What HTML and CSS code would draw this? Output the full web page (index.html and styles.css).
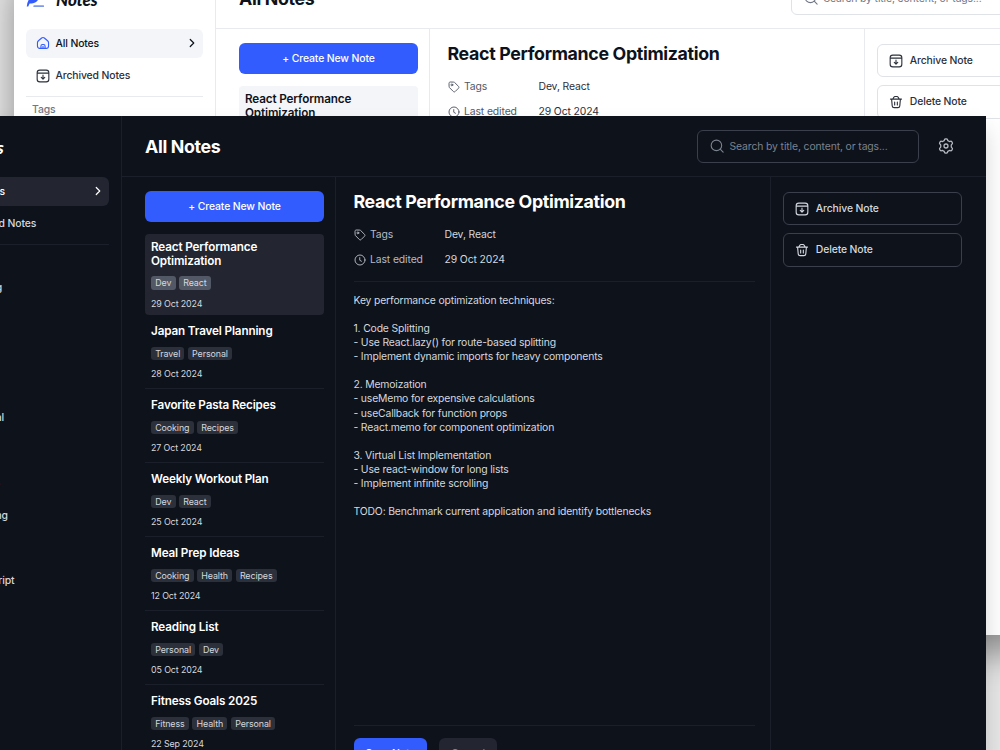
FILE: index.html
```html
<!DOCTYPE html>
<html lang="en">
<head>
    <meta charset="UTF-8">
    <meta name="viewport" content="width=device-width, initial-scale=1.0">
    <title>Notes</title>
    <link rel="stylesheet" href="styles.css">
</head>
<body>
    <svg class="sprite" width="0" height="0">
        <symbol id="home" viewBox="0 0 24 24">
            <path d="M8.500 21.200v-4.200c0-1.500.9-2.500 2.500-2.500h2c1.600 0 2.500 1 2.500 2.500v4.200M12 17.500v3M2.500 11.500c0-1.500.5-2.400 1.700-3.400l5.500-4.600c1.400-1.200 3.200-1.200 4.600 0l5.500 4.600c1.200 1 1.700 1.900 1.700 3.400V17c0 2.500-1.500 4.200-4 4.200H6.500C4 21.200 2.500 19.500 2.500 17z"/>
        </symbol>
        <symbol id="archive" viewBox="0 0 24 24">
            <rect x="2" y="2" width="20" height="20" rx="4.500"/>
            <path d="M2.500 7h19M12 10.500v6.500M9 14.500l3 3 3-3"/>
        </symbol>
        <symbol id="trash" viewBox="0 0 24 24">
            <path d="M2.500 7h19M4.500 7.500l1 11.200c.2 2 1.200 3 3.200 3h6.600c2 0 3-1 3.200-3l1-11.200M6.500 6.800l1.800-3c.5-.8 1-1.200 1.900-1.200h3.600c.9 0 1.400.4 1.900 1.200l1.800 3M9.700 12v5M14.300 12v5"/>
        </symbol>
        <symbol id="chevron" viewBox="0 0 24 24">
            <path d="M8.500 5l7 7-7 7"/>
        </symbol>
        <symbol id="search" viewBox="0 0 24 24">
            <circle cx="11" cy="11" r="9"/>
            <path d="M17.500 17.500l5 5"/>
        </symbol>
        <symbol id="gear" viewBox="0 0 24 24">
            <path d="M9.700 2.600c.3-1 .9-1.400 1.800-1.400h1c.9 0 1.500.4 1.800 1.400l.4 1.300 2.400 1.400 1.500-.4c1-.2 1.700.1 2.200.9l.6 1c.5.800.4 1.600-.3 2.300l-1.200 1.300v3.200l1.200 1.300c.7.7.8 1.500.3 2.300l-.6 1c-.5.800-1.200 1.100-2.200.9l-1.500-.4-2.400 1.400-.4 1.300c-.3 1-.9 1.400-1.800 1.400h-1c-.9 0-1.500-.4-1.800-1.400l-.4-1.300-2.400-1.400-1.500.4c-1 .2-1.700-.1-2.200-.9l-.6-1c-.5-.8-.4-1.600.3-2.300l1.200-1.300v-3.200L2.900 9.100c-.7-.7-.8-1.500-.3-2.300l.6-1c.5-.8 1.200-1.100 2.200-.9l1.500.4 2.400-1.400z"/>
            <circle cx="12" cy="12" r="3"/>
        </symbol>
        <symbol id="tag" viewBox="0 0 24 24">
            <path d="M2 4.500C2 3 3 2 4.500 2l6.700.2c.9 0 1.600.3 2.200.9l7.600 7.600c1.100 1.100 1.100 2.600 0 3.700l-6.600 6.600c-1.100 1.100-2.600 1.100-3.700 0l-7.600-7.600c-.6-.6-.9-1.300-.9-2.200z"/>
            <circle cx="7.800" cy="7.800" r="1.800"/>
        </symbol>
        <symbol id="clock" viewBox="0 0 24 24">
            <circle cx="12" cy="12" r="10"/>
            <path d="M11.500 7.200v5.300l3.400 2"/>
        </symbol>
        <symbol id="feather" viewBox="0 0 24 24">
            <path d="M1 22C2 11 10 2 21 2c.5 5-1.500 8-4 9.500l-3 .8 1.800 1.200C13 17 8.500 18 4.800 18L3 22z" fill="#335cff" stroke="none"/>
            <path d="M11 21.500h12" stroke="#7f98ea" stroke-width="2.500"/>
        </symbol>
    </svg>

    <!-- light theme window -->
    <div class="window light">
        <aside class="sidebar">
            <div class="logo"><svg class="logo-icon"><use href="#feather"/></svg>Notes</div>
            <nav>
                <a class="nav-item active"><svg class="icon"><use href="#home"/></svg>All Notes<svg class="icon chevron"><use href="#chevron"/></svg></a>
                <a class="nav-item"><svg class="icon"><use href="#archive"/></svg>Archived Notes</a>
            </nav>
            <div class="tags-title">Tags</div>
        </aside>
        <main>
            <header>
                <h1>All Notes</h1>
                <div class="search"><svg class="icon"><use href="#search"/></svg>Search by title, content, or tags...</div>
                <svg class="icon settings"><use href="#gear"/></svg>
            </header>
            <div class="columns">
                <section class="note-list">
                    <button class="btn primary create">+ Create New Note</button>
                    <article class="note selected">
                        <h3>React Performance Optimization</h3>
                        <div class="chips"><span>Dev</span><span>React</span></div>
                        <time>29 Oct 2024</time>
                    </article>
                </section>
                <section class="editor">
                    <h2>React Performance Optimization</h2>
                    <div class="meta">
                        <div class="label"><svg><use href="#tag"/></svg>Tags</div><div>Dev, React</div>
                        <div class="label"><svg><use href="#clock"/></svg>Last edited</div><div>29 Oct 2024</div>
                    </div>
                </section>
                <section class="actions">
                    <button class="btn outline"><svg class="icon"><use href="#archive"/></svg>Archive Note</button>
                    <button class="btn outline"><svg class="icon"><use href="#trash"/></svg>Delete Note</button>
                </section>
            </div>
        </main>
    </div>

    <!-- dark theme window -->
    <div class="window dark">
        <aside class="sidebar">
            <div class="logo"><svg class="logo-icon"><use href="#feather"/></svg>Notes</div>
            <nav>
                <a class="nav-item active"><svg class="icon"><use href="#home"/></svg>All Notes<svg class="icon chevron"><use href="#chevron"/></svg></a>
                <a class="nav-item"><svg class="icon"><use href="#archive"/></svg>Archived Notes</a>
            </nav>
            <div class="tags-title">Tags</div>
            <nav class="tag-nav">
                <a class="nav-item"><svg class="icon"><use href="#tag"/></svg>Cooking</a>
                <a class="nav-item"><svg class="icon"><use href="#tag"/></svg>Dev</a>
                <a class="nav-item"><svg class="icon"><use href="#tag"/></svg>Fitness</a>
                <a class="nav-item"><svg class="icon"><use href="#tag"/></svg>Health</a>
                <a class="nav-item"><svg class="icon"><use href="#tag"/></svg>Personal</a>
                <a class="nav-item"><svg class="icon"><use href="#tag"/></svg>React</a>
                <a class="nav-item"><svg class="icon"><use href="#tag"/></svg>Recipes</a>
                <a class="nav-item"><svg class="icon"><use href="#tag"/></svg>Shopping</a>
                <a class="nav-item"><svg class="icon"><use href="#tag"/></svg>Travel</a>
                <a class="nav-item"><svg class="icon"><use href="#tag"/></svg>TypeScript</a>
            </nav>
        </aside>
        <main>
            <header>
                <h1>All Notes</h1>
                <div class="search"><svg class="icon"><use href="#search"/></svg>Search by title, content, or tags...</div>
                <svg class="icon settings"><use href="#gear"/></svg>
            </header>
            <div class="columns">
                <section class="note-list">
                    <button class="btn primary create">+ Create New Note</button>
                    <article class="note selected">
                        <h3>React Performance Optimization</h3>
                        <div class="chips"><span>Dev</span><span>React</span></div>
                        <time>29 Oct 2024</time>
                    </article>
                    <article class="note">
                        <h3>Japan Travel Planning</h3>
                        <div class="chips"><span>Travel</span><span>Personal</span></div>
                        <time>28 Oct 2024</time>
                    </article>
                    <article class="note">
                        <h3>Favorite Pasta Recipes</h3>
                        <div class="chips"><span>Cooking</span><span>Recipes</span></div>
                        <time>27 Oct 2024</time>
                    </article>
                    <article class="note">
                        <h3>Weekly Workout Plan</h3>
                        <div class="chips"><span>Dev</span><span>React</span></div>
                        <time>25 Oct 2024</time>
                    </article>
                    <article class="note">
                        <h3>Meal Prep Ideas</h3>
                        <div class="chips"><span>Cooking</span><span>Health</span><span>Recipes</span></div>
                        <time>12 Oct 2024</time>
                    </article>
                    <article class="note">
                        <h3>Reading List</h3>
                        <div class="chips"><span>Personal</span><span>Dev</span></div>
                        <time>05 Oct 2024</time>
                    </article>
                    <article class="note">
                        <h3>Fitness Goals 2025</h3>
                        <div class="chips"><span>Fitness</span><span>Health</span><span>Personal</span></div>
                        <time>22 Sep 2024</time>
                    </article>
                </section>
                <section class="editor">
                    <h2>React Performance Optimization</h2>
                    <div class="meta">
                        <div class="label"><svg><use href="#tag"/></svg>Tags</div><div>Dev, React</div>
                        <div class="label"><svg><use href="#clock"/></svg>Last edited</div><div>29 Oct 2024</div>
                    </div>
                    <div class="content">Key performance optimization techniques:

1. Code Splitting
- Use React.lazy() for route-based splitting
- Implement dynamic imports for heavy components

2. Memoization
- useMemo for expensive calculations
- useCallback for function props
- React.memo for component optimization

3. Virtual List Implementation
- Use react-window for long lists
- Implement infinite scrolling

TODO: Benchmark current application and identify bottlenecks</div>
                    <div class="editor-footer">
                        <button class="btn primary">Save Note</button>
                        <button class="btn secondary">Cancel</button>
                    </div>
                </section>
                <section class="actions">
                    <button class="btn outline"><svg class="icon"><use href="#archive"/></svg>Archive Note</button>
                    <button class="btn outline"><svg class="icon"><use href="#trash"/></svg>Delete Note</button>
                </section>
            </div>
        </main>
    </div>
</body>
</html>
```
FILE: styles.css
```css
* {
    box-sizing: border-box;
}
body {
    margin: 0;
    height: 750px;
    position: relative;
    overflow: hidden;
    background: #e6e6e6;
    font-family: Inter, "Liberation Sans", sans-serif;
    font-size: 10.4px;
    letter-spacing: -0.12px;
}
h1, h2, h3 {
    margin: 0;
}
svg {
    fill: none;
    stroke: currentColor;
    stroke-width: 1.9;
    stroke-linecap: round;
    stroke-linejoin: round;
    flex: none;
}
.sprite {
    position: absolute;
}
.icon {
    width: 14px;
    height: 14px;
}

/* windows */
.window {
    position: absolute;
    display: flex;
    width: 1066px;
    height: 667px;
    background: var(--bg);
    color: var(--text);
}
.light {
    --bg: #fff;
    --text: #2b303b;
    --strong: #0e121b;
    --muted: #525866;
    --hint: #717784;
    --line: #e8eaee;
    --outline: #dfe2e7;
    --fill: #f3f5f8;
    --home: #335cff;
    left: 14px;
    top: -32px;
    box-shadow: 0 18px 32px rgba(0, 0, 0, 0.38);
}
.dark {
    --bg: #0e121b;
    --text: #d5d8df;
    --strong: #fff;
    --muted: #b6bac3;
    --hint: #7c828e;
    --line: #1b1f29;
    --outline: #3a3f4b;
    --fill: #232530;
    --home: #335cff;
    left: -80px;
    top: 116px;
    box-shadow: 0 14px 22px rgba(0, 0, 0, 0.16);
}

/* sidebar */
.sidebar {
    width: 202px;
    padding: 20px 12px;
    border-right: 1px solid var(--line);
}
.logo {
    display: flex;
    align-items: center;
    gap: 12px;
    height: 22px;
    font-family: Lato, sans-serif;
    font-size: 17px;
    font-weight: 900;
    font-style: italic;
    color: var(--strong);
}
.logo-icon {
    width: 18px;
    height: 18px;
}
nav {
    display: flex;
    flex-direction: column;
    gap: 3px;
    margin-top: 18.5px;
    padding-bottom: 5.5px;
    border-bottom: 1px solid var(--line);
}
.nav-item {
    display: flex;
    align-items: center;
    gap: 6px;
    height: 29.5px;
    padding: 0 5px 0 9.5px;
    border-radius: 6px;
    font-weight: 500;
}
.nav-item.active {
    background: var(--fill);
    color: var(--strong);
}
.nav-item.active .icon:first-child {
    color: var(--home);
}
.chevron {
    width: 12px;
    height: 12px;
    margin-left: auto;
    stroke-width: 2.4;
}
.tags-title {
    padding: 6px 6px 8px;
    line-height: 13px;
    font-weight: 500;
    color: var(--hint);
}
.tag-nav {
    margin-top: 1px;
    border: none;
}

/* header */
main {
    flex: 1;
    display: flex;
    flex-direction: column;
}
header {
    display: flex;
    align-items: center;
    height: 61px;
    padding: 0 32px 0 23px;
    border-bottom: 1px solid var(--line);
}
h1 {
    flex: 1;
    font-size: 17.8px;
    font-weight: 700;
    letter-spacing: -0.35px;
    color: var(--strong);
}
.search {
    display: flex;
    align-items: center;
    gap: 6px;
    width: 222px;
    height: 33px;
    padding: 0 11.5px;
    border: 1px solid var(--outline);
    border-radius: 6px;
    color: var(--hint);
}
.settings {
    width: 16px;
    height: 16px;
    margin-left: 19px;
    color: var(--muted);
}

/* three columns */
.columns {
    flex: 1;
    display: flex;
    min-height: 0;
}
.note-list {
    width: 214px;
    padding: 14px 11px 0 23px;
    border-right: 1px solid var(--line);
    overflow: hidden;
}
.btn {
    display: flex;
    align-items: center;
    justify-content: center;
    height: 31px;
    padding: 0 12px;
    border: none;
    border-radius: 6px;
    font: inherit;
    font-weight: 500;
    letter-spacing: inherit;
}
.primary {
    background: #335cff;
    color: #fff;
}
.secondary {
    background: var(--fill);
    color: var(--hint);
}
.create {
    width: 100%;
    margin-bottom: 12px;
}
.note {
    padding: 6px 6px 9px;
    margin-bottom: 2.5px;
    border-bottom: 1px solid var(--line);
}
.note.selected {
    padding-bottom: 6px;
    margin-bottom: 3px;
    background: var(--fill);
    border: none;
    border-radius: 4px;
}
.note h3 {
    font-size: 11.7px;
    font-weight: 600;
    line-height: 14px;
    letter-spacing: -0.14px;
    color: var(--strong);
}
.chips {
    display: flex;
    gap: 3.5px;
    margin: 9px 0 8px;
}
.selected .chips {
    margin-top: 8px;
}
.chips span {
    height: 13.5px;
    padding: 0 4.2px;
    border-radius: 3px;
    background: #2b303b;
    font-size: 8.9px;
    line-height: 13.5px;
    letter-spacing: -0.09px;
}
.selected .chips span {
    background: #525866;
}
.note time {
    display: block;
    font-size: 8.9px;
    line-height: 11px;
}

/* editor */
.editor {
    display: flex;
    flex-direction: column;
    width: 435px;
    padding: 14px 15.5px 14px 17.5px;
    border-right: 1px solid var(--line);
}
h2 {
    font-size: 17.8px;
    font-weight: 700;
    line-height: 22px;
    letter-spacing: -0.34px;
    color: var(--strong);
}
.meta {
    display: grid;
    grid-template-columns: 91px 1fr;
    row-gap: 11px;
    padding: 15px 0 14px;
    line-height: 14px;
    border-bottom: 1px solid var(--line);
}
.label {
    display: flex;
    align-items: center;
    gap: 4.5px;
    color: var(--muted);
}
.label svg {
    width: 12px;
    height: 12px;
}
.content {
    flex: 1;
    padding-top: 12px;
    white-space: pre-wrap;
    line-height: 14.07px;
    letter-spacing: -0.165px;
}
.editor-footer {
    display: flex;
    gap: 12px;
    padding-top: 12px;
    border-top: 1px solid var(--line);
}

/* actions */
.actions {
    flex: 1;
    display: flex;
    flex-direction: column;
    gap: 8px;
    padding: 15px 24px 0 12px;
}
.outline {
    justify-content: flex-start;
    gap: 6.5px;
    height: 33.3px;
    padding: 0 11.3px;
    border: 1px solid var(--outline);
    background: none;
    color: var(--text);
}
```
